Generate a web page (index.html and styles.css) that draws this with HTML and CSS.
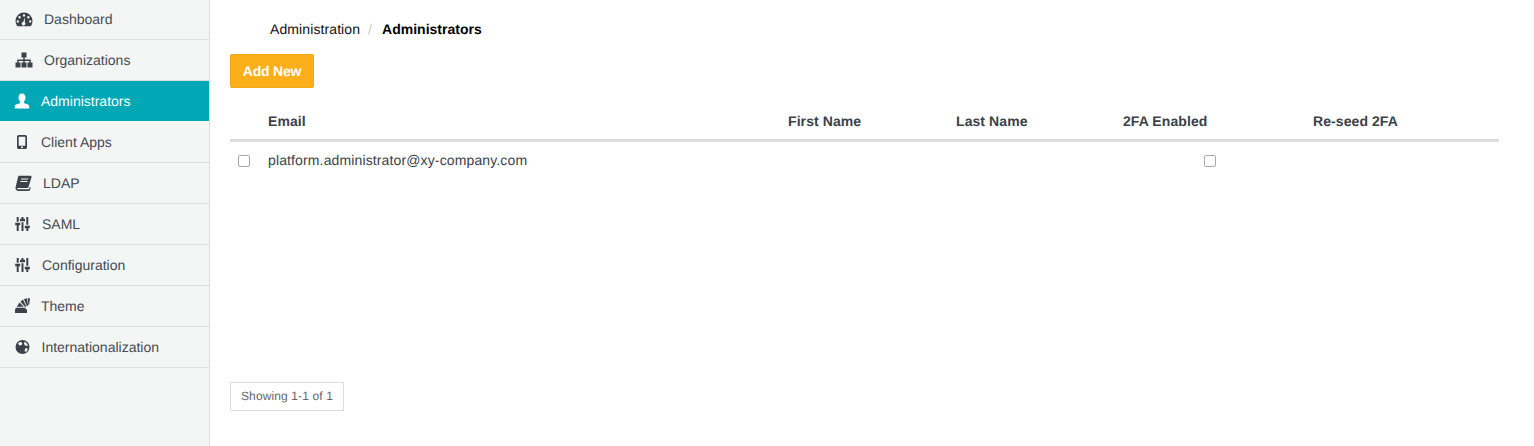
FILE: index.html
```html
<!DOCTYPE html>
<html lang="en">
<head>
    <meta charset="UTF-8">
    <title>Administrators</title>
    <link rel="stylesheet" href="styles.css">
</head>
<body>
    <div class="app">
        <nav class="sidebar">
            <a class="nav-item">
                <svg class="icon w-18" viewBox="0 0 18 16"><path fill-rule="evenodd" d="M9 1.500a8.500 8.500 0 0 1 8.500 8.500c0 1.800-.5 3.400-1.400 4.700-.2.300-.5.500-.9.500H2.800c-.4 0-.7-.2-.9-.5A8.500 8.500 0 0 1 .5 10 8.500 8.500 0 0 1 9 1.500ZM9 3.200a1.200 1.200 0 1 0 0 2.400 1.200 1.200 0 0 0 0-2.400ZM4.600 5a1.200 1.200 0 1 0 0 2.400 1.200 1.200 0 0 0 0-2.400ZM13.400 5a1.200 1.200 0 1 0 0 2.400 1.200 1.200 0 0 0 0-2.400ZM2.800 9.200a1.200 1.200 0 1 0 0 2.400 1.200 1.200 0 0 0 0-2.400ZM15.200 9.200a1.200 1.200 0 1 0 0 2.400 1.200 1.200 0 0 0 0-2.400ZM10 6.500 8.200 10.900a1.800 1.800 0 1 0 1.600.4Z"/></svg>
                <span>Dashboard</span>
            </a>
            <a class="nav-item">
                <svg class="icon w-18" viewBox="0 0 18 16"><path d="M6.500 .5h5v5H9.700v2h6.100V10.500h1.700v5h-5v-5h1.900V9H9.700v1.500h1.800v5h-5v-5h1.800V9H3.600v1.500h1.900v5h-5v-5h1.700V7.500h6.100v-2H6.500z"/></svg>
                <span>Organizations</span>
            </a>
            <a class="nav-item is-active">
                <svg class="icon w-15" viewBox="0 0 15 16"><path d="M7 .5C9.300.5 10.500 2.300 10.500 4.500c0 1.700-.7 3.300-1.700 4.200v1.200l4 1.700c1 .4 1.400 1 1.400 1.900v2H-.2v-2c0-.9.400-1.500 1.400-1.900l4-1.700V8.700C4.200 7.800 3.500 6.200 3.500 4.500 3.500 2.300 4.700.5 7 .5Z"/></svg>
                <span>Administrators</span>
            </a>
            <a class="nav-item">
                <svg class="icon w-15" viewBox="0 0 15 16"><path fill-rule="evenodd" d="M3.800 1h6.400c1.100 0 1.800.7 1.800 1.800v10.400c0 1.100-.7 1.800-1.800 1.800H3.800C2.700 15 2 14.300 2 13.200V2.800C2 1.700 2.700 1 3.800 1ZM3.700 2.700v9h6.600v-9ZM7 12.300a1 1 0 1 0 0 2 1 1 0 0 0 0-2Z"/></svg>
                <span>Client Apps</span>
            </a>
            <a class="nav-item">
                <svg class="icon w-17" viewBox="0 0 17 16"><path fill-rule="evenodd" d="M4.300.8H15.500c.8 0 1.300.7 1 1.500l-2.900 9.500c-.3.900-.8 1.200-1.700 1.200H3.100c-.6 0-1 .3-1 .6 0 .4.300.7 1 .7h10.300c.4 0 .7-.2.800-.6l.5-1.700 1 .6-.7 2.300c-.2.700-.8 1.100-1.500 1.100H2.800C1.500 15.500.5 14.400.5 13c0-.4.100-.8.200-1.200L3 2.300C3.200 1.400 3.500.8 4.300.8ZM6.200 3.500l-.3 1H13l.3-1ZM5.500 6l-.3 1H12.300l.3-1Z"/></svg>
                <span>LDAP</span>
            </a>
            <a class="nav-item gap-wider">
                <svg class="icon w-15" viewBox="0 0 15 16"><path d="M1.700 1h2v4.800h-2ZM.2 6.800h5v2.400H3.700V15h-2V9.200H.2ZM6.500 1h2v1.800h1.500v2.400H5V2.800h1.500ZM6.500 6.200h2V15h-2ZM11.300 1h2v7.800h-2ZM9.800 9.800h5v2.400h-1.500V15h-2v-2.800H9.800Z"/></svg>
                <span>SAML</span>
            </a>
            <a class="nav-item gap-wider">
                <svg class="icon w-15" viewBox="0 0 15 16"><path d="M1.700 1h2v4.800h-2ZM.2 6.800h5v2.400H3.700V15h-2V9.200H.2ZM6.500 1h2v1.800h1.500v2.400H5V2.800h1.500ZM6.500 6.200h2V15h-2ZM11.300 1h2v7.800h-2ZM9.800 9.800h5v2.400h-1.500V15h-2v-2.800H9.800Z"/></svg>
                <span>Configuration</span>
            </a>
            <a class="nav-item">
                <svg class="icon w-15" viewBox="0 0 15 16"><path d="M1 9.800h9.500v1.200l1.500.6v3.400H0v-3.600ZM1.700 8.700 4.500 4.600l4.300 4.100ZM5.400 3.800 8 1.500l3.200 6.900-1 .5ZM8.900 1.200l2.800-.9 1.500 7.200-1.300.8ZM12.500.3h2.500l-.8 6.200-.8.500Z"/></svg>
                <span>Theme</span>
            </a>
            <a class="nav-item gap-wide">
                <svg class="icon w-15" viewBox="0 0 15 16"><path fill-rule="evenodd" d="M7.500 1a7 7 0 1 1 0 14 7 7 0 0 1 0-14ZM5 2.800 3 4.500l1.400 2 2.300-.4.700-2.200ZM9.800 2.700 8.800 4.500l1.200 2 2.900.5c-.3-1.800-1.500-3.400-3.100-4.300ZM10.500 9l-1 3 1.500 1c1-.8 1.600-1.900 1.900-3.200Z"/></svg>
                <span>Internationalization</span>
            </a>
        </nav>

        <main class="content">
            <ol class="breadcrumb">
                <li>Administration</li>
                <li class="divider">/</li>
                <li class="current">Administrators</li>
            </ol>

            <button class="btn-add">Add New</button>

            <table class="grid">
                <thead>
                    <tr>
                        <th class="col-check"></th>
                        <th class="col-email">Email</th>
                        <th class="col-first">First Name</th>
                        <th class="col-last">Last Name</th>
                        <th class="col-tfa">2FA Enabled</th>
                        <th>Re-seed 2FA</th>
                    </tr>
                </thead>
                <tbody>
                    <tr>
                        <td class="col-check"><span class="checkbox"></span></td>
                        <td class="cell-email">platform.administrator@xy-company.com</td>
                        <td></td>
                        <td></td>
                        <td class="cell-center"><span class="checkbox"></span></td>
                        <td></td>
                    </tr>
                </tbody>
            </table>

            <div class="pager">Showing 1-1 of 1</div>
        </main>
    </div>
</body>
</html>
```

FILE: styles.css
```css
* {
    box-sizing: border-box;
}

html,
body {
    height: 100%;
}

body {
    margin: 0;
    font-family: "Liberation Sans", Arial, sans-serif;
    font-size: 14px;
    color: #3b4249;
    background-color: #fff;
    overflow: hidden;
    text-rendering: geometricPrecision;
}

.app {
    display: flex;
    height: 100%;
}

.sidebar {
    flex: 0 0 210px;
    margin-top: -1px;
    background-color: #f4f6f6;
    border-right: 1px solid #dcdedf;
}

.nav-item {
    display: flex;
    align-items: center;
    gap: 11px;
    height: 41px;
    padding-left: 15px;
    border-bottom: 1px solid #dcdedf;
    color: #454b52;
}

.nav-item.is-active {
    background-color: #00a8b5;
    background-clip: padding-box;
    border-bottom-color: transparent;
    color: #fff;
}

.gap-wide {
    gap: 11.5px;
}

.gap-wider {
    gap: 12px;
}

.icon {
    flex: none;
    height: 16px;
    fill: currentColor;
    color: #3b4249;
    overflow: visible;
}

.is-active .icon {
    color: #fff;
}

.w-18 {
    width: 18px;
}

.w-17 {
    width: 17px;
}

.w-15 {
    width: 15px;
}

.content {
    flex: 1;
    padding: 20px 35px 0 20px;
}

.breadcrumb {
    display: flex;
    gap: 7px;
    margin: 0 0 16px;
    padding: 0 0 0 40px;
    list-style: none;
    color: #111;
    line-height: 18px;
    letter-spacing: 0.1px;
}

.breadcrumb .divider {
    color: #ccc;
    margin: 0 3px 0 1px;
}

.breadcrumb .current {
    font-weight: bold;
    letter-spacing: 0;
    color: #000;
}

.btn-add {
    display: block;
    width: 84px;
    height: 34px;
    padding: 0;
    border: 1px solid #f0a818;
    border-radius: 2px;
    background-color: #fdae1b;
    color: #fff;
    font: bold 14px "Liberation Sans", Arial, sans-serif;
    letter-spacing: -0.2px;
    text-rendering: geometricPrecision;
}

.grid {
    width: 100%;
    margin-top: 12px;
    border-collapse: collapse;
    table-layout: fixed;
}

.grid th {
    height: 40px;
    padding: 4px 0 0 8px;
    text-align: left;
    border-bottom: 3px solid #dddddd;
    font-weight: bold;
    letter-spacing: 0.08px;
}

.grid td {
    height: 40px;
    padding: 0 0 2px 8px;
}

.col-check {
    width: 30px;
}

.col-email {
    width: 520px;
}

.col-first {
    width: 168px;
}

.col-last {
    width: 167px;
}

.col-tfa {
    width: 190px;
}

.cell-email {
    letter-spacing: 0.13px;
}

.grid .cell-center {
    padding-right: 8px;
    text-align: center;
}

.checkbox {
    display: inline-block;
    width: 12px;
    height: 12px;
    border: 1px solid #aaa;
    border-radius: 2px;
    background-color: #fff;
    vertical-align: middle;
}

.pager {
    width: 114px;
    height: 29px;
    margin-top: 202px;
    border: 1px solid #dddddd;
    color: #666;
    font-size: 12px;
    line-height: 27px;
    letter-spacing: 0.12px;
    text-align: center;
}
```
